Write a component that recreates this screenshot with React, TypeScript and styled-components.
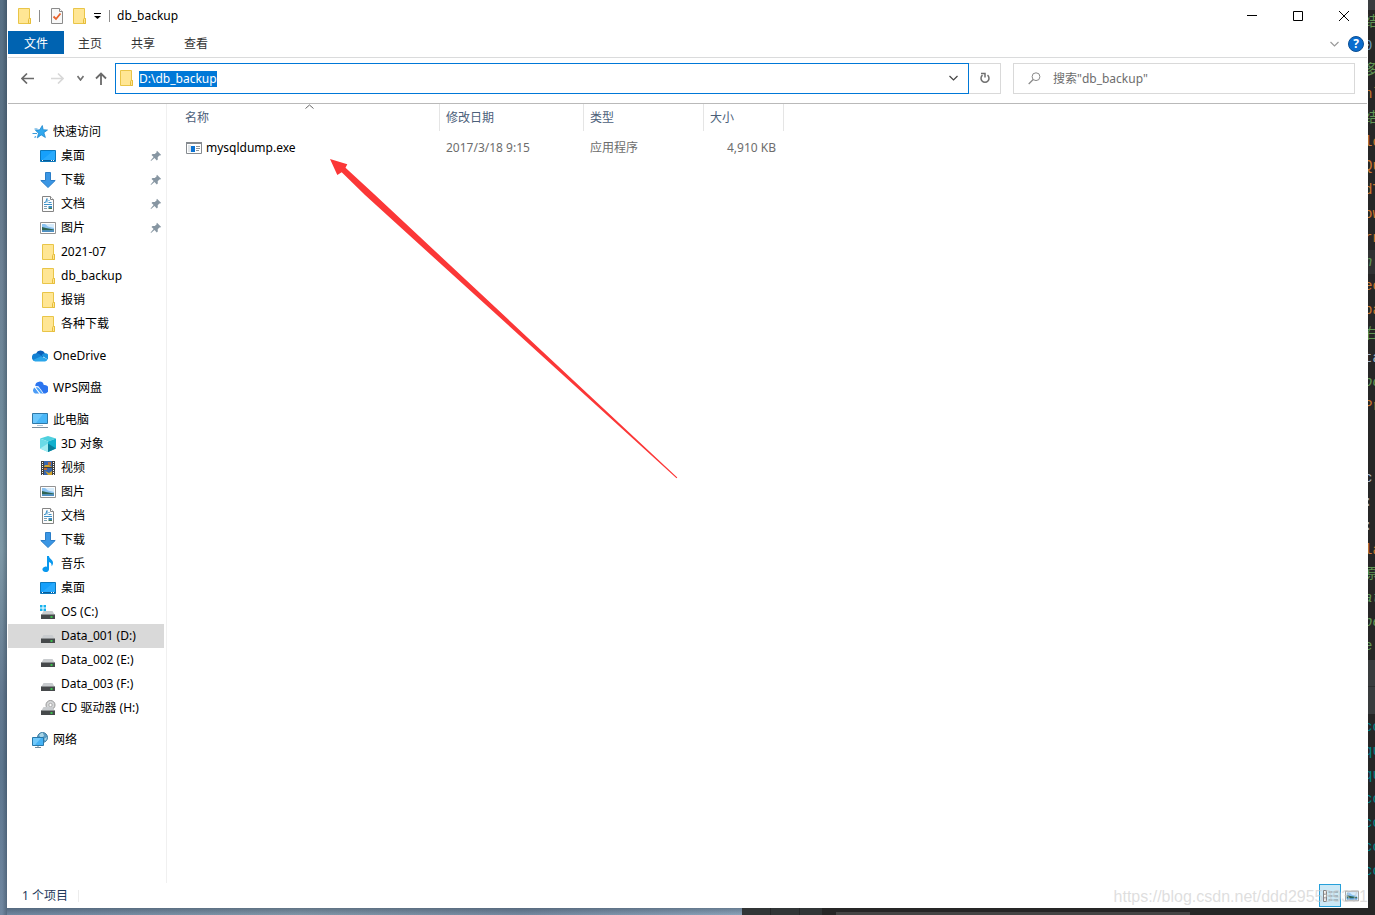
import React, { useEffect, useRef } from "react";
import styled, { createGlobalStyle, css } from "styled-components";

const GlobalStyle = createGlobalStyle`
  * { box-sizing: border-box; }
  body {
    margin: 0;
    font-family: "Noto Sans", "Noto Sans CJK SC", sans-serif;
    font-size: 12px;
    line-height: 16px;
    color: #000;
    background: #262626;
  }
  button, input { font: inherit; color: inherit; }
  svg { display: block; flex: none; }
`;

/* ---------- desktop behind the window ---------- */

const Desktop = styled.div`
  display: grid;
  grid-template-columns: 7px minmax(0, 1fr) 7px;
  grid-template-rows: minmax(0, 1fr) 7px;
  height: 100vh;
  overflow: hidden;
`;

const Wallpaper = styled.div`
  grid-row: 1 / 3;
  background: linear-gradient(90deg, transparent 30%, rgba(20, 35, 50, 0.3)),
    linear-gradient(#587085, #5b7285 14%, #6d8194 30%, #6f8a9b 45%, #7e98a6 60%, #62788f 76%, #5d768e 84%, #7087a0);
`;

const Taskline = styled.div`
  display: flex;
  background: #262626;
`;

const WallpaperFoot = styled.div`
  flex: 0 0 54%;
  background: linear-gradient(rgba(20, 35, 50, 0.3), transparent),
    linear-gradient(90deg, #7087a0, #8297a9 40%, #7589a0 70%, #8ba3ba);
`;

const EditorTabs = styled.div`
  flex: 0 0 80px;
  background: repeating-linear-gradient(90deg, #313536 0 28px, #262829 28px 29px);
`;

const EditorScroll = styled.div`
  flex: 0 0 26%;
  margin: 4px 0 0 14px;
  background: #454545;
`;

const Editor = styled.div`
  grid-column: 3;
  grid-row: 1 / 3;
  overflow: hidden;
  background: #262626;
  border-top: 10px solid #3a3d40;
  font-family: "Liberation Mono", "Noto Sans CJK SC", monospace;
  font-size: 14px;
`;

const CodeLine = styled.div<{ $color?: string; $italic?: boolean; $active?: boolean }>`
  height: 24px;
  line-height: 24px;
  white-space: pre;
  text-indent: -4px;
  color: ${(p) => p.$color || "#a9b7c6"};
  font-style: ${(p) => (p.$italic ? "italic" : "normal")};
  background: ${(p) => (p.$active ? "#303233" : "transparent")};
`;

const ToolStrip = styled.div`
  height: 54px;
  margin: 2px 0 1px;
  background: linear-gradient(#393c3e 26px, #2c2e2f 26px 27px, #393c3e 27px);
`;

/* ---------- window ---------- */

const Window = styled.main`
  position: relative;
  display: flex;
  flex-direction: column;
  min-width: 0;
  padding: 0 1px;
  background: #fff;
`;

const TitleBar = styled.header`
  display: flex;
  align-items: center;
  height: 31px;
  padding-left: 10px;
`;

const QuickButton = styled.button<{ $pad?: boolean }>`
  display: flex;
  padding: ${(p) => (p.$pad ? "0 2px 0 3px" : "0")};
  border: 0;
  background: none;
`;

const QuickTools = styled.div`
  display: flex;
  align-items: center;
  gap: 8px;
`;

const Divider = styled.span`
  width: 1px;
  height: 12px;
  background: #8c8c8c;
`;

const Title = styled.h1`
  flex: 1;
  margin: 0 0 0 7px;
  font-size: 12px;
  font-weight: 400;
`;

const CaptionButton = styled.button`
  display: grid;
  place-items: center;
  width: 46px;
  height: 30px;
  padding: 0;
  border: 0;
  background: none;
`;

const Ribbon = styled.nav`
  display: flex;
  align-items: flex-start;
  height: 27px;
  border-bottom: 1px solid #dadbdc;
`;

const RibbonTab = styled.button<{ $file?: boolean }>`
  height: 23px;
  margin-right: 1px;
  padding: 2px 14px 0;
  border: 0;
  background: none;
  color: #333;
  ${(p) => p.$file && css`
    margin-right: 0;
    padding: 2px 16px 0;
    background: #0063b1;
    color: #fff;
  `}
`;

const RibbonEnd = styled.div`
  display: flex;
  align-items: center;
  gap: 9px;
  height: 26px;
  margin-left: auto;
  padding-right: 3px;
`;

const HelpButton = styled.button`
  width: 16px;
  height: 16px;
  padding: 0;
  border: 1px solid #0b4f93;
  border-radius: 50%;
  background: #0a6cce;
  color: #fff;
  font-weight: 700;
  line-height: 14px;
`;

const NavRow = styled.div`
  display: flex;
  align-items: center;
  height: 46px;
  padding: 0 12px 5px 4px;
  border-bottom: 1px solid #b9b9b9;
`;

const NavButton = styled.button<{ $w: number }>`
  display: grid;
  place-items: center;
  width: ${(p) => p.$w}px;
  height: 29px;
  padding: 0;
  border: 0;
  background: none;
`;

const Address = styled.div`
  display: flex;
  align-items: center;
  flex: 1;
  min-width: 0;
  height: 31px;
  margin-left: 2px;
  padding: 0 4px;
  border: 1px solid #0078d7;
`;

const AddressInput = styled.input`
  flex: 1;
  min-width: 0;
  margin-left: 6px;
  padding: 2px 0 0;
  border: 0;
  outline: 0;
  background: none;
  &::selection { background: #0078d7; color: #fff; }
`;

const Refresh = styled.button`
  display: grid;
  place-items: center;
  width: 32px;
  height: 31px;
  padding: 0;
  border: 1px solid #d9d9d9;
  border-left: 0;
  background: none;
`;

const Search = styled.label`
  display: flex;
  align-items: center;
  flex: 0 1 342px;
  gap: 12px;
  height: 31px;
  margin-left: 12px;
  padding-left: 14px;
  border: 1px solid #d9d9d9;
`;

const SearchInput = styled.input`
  flex: 1;
  min-width: 0;
  padding: 2px 0 0;
  border: 0;
  outline: 0;
  background: none;
  &::placeholder { color: #6d6d6d; opacity: 1; }
`;

const Body = styled.div`
  display: flex;
  flex: 1;
  min-height: 0;
`;

const Sidebar = styled.nav`
  flex: 0 0 159px;
  padding: 16px 2px 0 0;
  border-right: 1px solid #f0f0f0;
`;

const TreeGroup = styled.ul`
  margin: 0 0 8px;
  padding: 0;
  list-style: none;
`;

const TreeItem = styled.a<{ $root?: boolean; $selected?: boolean }>`
  display: flex;
  align-items: center;
  gap: 5px;
  height: 24px;
  padding: 0 2px 0 ${(p) => (p.$root ? 24 : 32)}px;
  background: ${(p) => (p.$selected ? "#d9d9d9" : "transparent")};
  color: #000;
  text-decoration: none;
  white-space: nowrap;
`;

const TreeLabel = styled.span`
  flex: 1;
`;

const FilePane = styled.section`
  position: relative;
  flex: 1;
  min-width: 0;
`;

const FileTable = styled.table`
  width: 605px;
  margin-left: 12px;
  table-layout: fixed;
  border-collapse: separate;
  border-spacing: 0;
`;

const HeadCell = styled.th<{ $w: number }>`
  position: relative;
  width: ${(p) => p.$w}px;
  height: 27px;
  padding: 0 6px;
  border-right: 1px solid #e5e5e5;
  color: #4c607a;
  font-weight: 400;
  text-align: left;
`;

const SortMark = styled.span`
  position: absolute;
  top: 0;
  left: 50%;
  margin-left: -4px;
`;

const Cell = styled.td<{ $right?: boolean }>`
  height: 33px;
  padding: 0 ${(p) => (p.$right ? 8 : 6)}px 0 6px;
  color: #6d6d6d;
  text-align: ${(p) => (p.$right ? "right" : "left")};
`;

const FileName = styled.a`
  display: flex;
  align-items: center;
  gap: 4px;
  padding-left: 1px;
  color: #000;
  text-decoration: none;
`;

const Pointer = styled.svg`
  position: absolute;
  top: 54px;
  left: 162px;
`;

const StatusBar = styled.footer`
  display: flex;
  align-items: center;
  height: 25px;
  padding: 0 4px 0 14px;
  color: #1e395b;
`;

const StatusText = styled.span`
  flex: 1;
`;

const StatusCount = styled.span`
  display: inline-block;
  padding-right: 11px;
  background: linear-gradient(#ececec, #ececec) right center / 1px 12px no-repeat;
`;

const ViewButton = styled.button<{ $on?: boolean }>`
  display: grid;
  place-items: center;
  width: 22px;
  height: 23px;
  padding: 0;
  border: 1px solid ${(p) => (p.$on ? "#26a0da" : "transparent")};
  background: ${(p) => (p.$on ? "#cbe8f6" : "none")};
`;

const Watermark = styled.span`
  position: absolute;
  right: 0;
  bottom: 2px;
  color: rgba(200, 200, 200, 0.6);
  font-family: "Liberation Sans", sans-serif;
  font-size: 16px;
  line-height: 18px;
  pointer-events: none;
`;

/* ---------- icons ---------- */

const FolderIcon = () => (
  <svg width="13" height="16" viewBox="0 0 13 16">
    <path d="M.5.5h11v10h1v5H.5z" fill="#ffe694" stroke="#e9c548" />
    <path d="M10.500 15V11.500q0-1 1-1h1v5h-2z" fill="#ffe694" stroke="#e6bd3a" />
  </svg>
);

const CheckDocIcon = () => (
  <svg width="12" height="16" viewBox="0 0 12 16">
    <path d="M.5.5h8l3 3v12H.5z" fill="#f8f8f8" stroke="#8b8b8b" />
    <path d="M8.500.5v3h3" fill="#fff" stroke="#8b8b8b" />
    <path d="m2.500 8.500 2.500 2.500 4.500-5.500" fill="none" stroke="#e8622c" strokeWidth="1.800" />
  </svg>
);

const StarIcon = () => (
  <svg width="16" height="16" viewBox="0 0 16 16">
    <path d="M10.300 1.500l.9 4.200 4.300.3-3.600 2.700 1.500 4.800-4.200-2.600-3.900 3 1.200-4.700L3.400 6.300l4.300-.5z" fill="#31a8ee" stroke="#1881c8" strokeWidth=".7" />
    <path d="M2.500 5h3M.5 9.500h4.500M4 12.500l-1.500 1" stroke="#3c9bdb" strokeWidth="1.200" />
  </svg>
);

const DesktopIcon = () => (
  <svg width="16" height="16" viewBox="0 0 16 16">
    <path d="M.5 2.500h15v11H.5z" fill="#16a0fb" stroke="#0b78bd" />
    <path d="M1 13 13 3h2v9z" fill="#35b1ff" opacity=".6" />
    <path d="M1 12.500h14" stroke="#075b97" />
    <path d="M2 12.500h1M11 12.500h1M13 12.500h1" stroke="#fff" />
  </svg>
);

const DownloadIcon = () => (
  <svg width="16" height="16" viewBox="0 0 16 16">
    <path d="M5.500.5h5v8h4.700L8 15.500.8 8.500h4.700z" fill="#3a96e4" stroke="#2a7dc7" />
  </svg>
);

const DocIcon = () => (
  <svg width="16" height="16" viewBox="0 0 16 16">
    <path d="M2.500.5h8l3 3v12h-11z" fill="#fcfcfc" stroke="#848484" />
    <path d="M10.500.5v3h3" fill="#fff" stroke="#848484" />
    <path d="M4 6.500h1.500L7 2.500v4M8.500 4.500h1M8.500 6.500h3M4 8.500h8" fill="none" stroke="#3b91c9" />
    <path d="M4 10.500h3M4 12.500h3" stroke="#7d9db3" />
    <path d="M8.500 10H12v2H8.500z" fill="#3a8cc0" />
    <path d="M8.500 12H12v1H8.500z" fill="#42784f" />
  </svg>
);

const PictureIcon = ({ size = 16 }: { size?: number }) => (
  <svg width={size} height={size} viewBox="0 0 16 16">
    <path d="M.5 2.500h15v11H.5z" fill="#fff" stroke="#939393" />
    <path d="M2 4h12v8H2z" fill="#8cc3f2" />
    <path d="M5 4h9v4L8 6.500z" fill="#d7ecfb" />
    <path d="M2 7l4 1 8 1.500v1H2z" fill="#2f6554" />
    <path d="M2 10.500h12V12H2z" fill="#4d8fc4" />
  </svg>
);

const PinIcon = () => (
  <svg width="12" height="12" viewBox="0 0 12 12">
    <path d="m7 .8 4.200 4.200-1.200.6-.6-.2-1.700 1.900.1 2.200-1 .9-2.300-2.300L1 11l-.4-.4 3-3.500L1.500 4.900l1-1 2.300.1 1.900-1.700-.2-.7z" fill="#8796a2" />
  </svg>
);

const OneDriveIcon = () => (
  <svg width="16" height="16" viewBox="0 0 16 16">
    <path d="M4 5.500a5 5 0 0 1 9-.3l-3 5z" fill="#0a5eb8" />
    <path d="M3.500 5.500a4 4 0 0 1 4 .7l3.500 3-8 4A3.900 3.900 0 0 1 3.500 5.500z" fill="#1381d3" />
    <path d="M9.500 7.500a4 4 0 0 1 3.800-2.200 3.400 3.400 0 0 1 2.200 6z" fill="#1a91dd" />
    <path d="m1 12 8-3.800 6.600 3a3 3 0 0 1-2.600 2.300H3.500A3 3 0 0 1 1 12z" fill="#2aa5ea" />
  </svg>
);

const WpsIcon = () => (
  <svg width="16" height="16" viewBox="0 0 16 16">
    <path d="M3.300 6a4.300 4.300 0 0 1 8.500-1 4.300 4.300 0 0 1 1.500 8.500h-2.800L6.500 6.500z" fill="#2c75ef" />
    <path d="M4.500 7q1.800-.3 3 1.500l3.500 5H8.500L4 8z" fill="#4aa4fa" />
    <path d="M2.800 7.500 7.300 13.500H3A3.300 3.300 0 0 1 2.800 7.500z" fill="#4b9cf6" />
    <path d="M3.200 7.700 7.600 13.500M4.500 6.600q2-.2 3.500 2l3.200 4.900" fill="none" stroke="#fff" strokeWidth=".8" />
  </svg>
);

const ComputerIcon = () => (
  <svg width="16" height="16" viewBox="0 0 16 16">
    <path d="M.5 1.500h15v10H.5z" fill="#49b7f8" stroke="#2f79a8" />
    <path d="M1 2h10L4 11H1z" fill="#83d2ff" opacity=".6" />
    <path d="M5 13.500h6" stroke="#a9c4d6" />
    <path d="M0 15.500h16" stroke="#7b8d9b" />
  </svg>
);

const CubeIcon = () => (
  <svg width="16" height="16" viewBox="0 0 16 16">
    <path d="m8 0 8 2.500L8 5.500 0 2.500z" fill="#4fd0de" />
    <path d="m0 2.500 8 3V16l-8-3.500z" fill="#6adbe7" />
    <path d="m16 2.500-8 3V16l8-3.500z" fill="#12b0cd" />
    <path d="m0 12.500 8-5V16z" fill="#a3edf2" />
    <path d="m8 7.500 8 5L8 16z" fill="#087f9b" />
  </svg>
);

const VideoIcon = () => (
  <svg width="16" height="16" viewBox="0 0 16 16">
    <path d="M1 1h14v14H1z" fill="#404040" />
    <path d="M4 1h8v6H4zM4 8h8v7H4z" fill="#3867ae" />
    <path d="M5 5h4l3 2H4zM5 11l4 2 3-2v4H8z" fill="#d3a52b" />
    <path d="M8 2h3v3H8zM4 8h3v2H4z" fill="#bb6b35" />
    <path d="M2.500 2v13M13.500 2v13" stroke="#fff" strokeDasharray="1 1" />
  </svg>
);

const MusicIcon = () => (
  <svg width="16" height="16" viewBox="0 0 16 16">
    <path d="M7 0h2c0 3 4 3.500 4 7 0 1.500-.8 2.600-1.500 3.300C12 7.500 10.500 6.500 9 6v7a3.300 2.700 0 1 1-2-2.200z" fill="#0998ee" />
  </svg>
);

const DriveIcon = ({ kind }: { kind?: "os" | "cd" }) => (
  <svg width="16" height="16" viewBox="0 0 16 16">
    {kind === "os" && <path d="M0 1h2.500v2.500H0zM3.500 1H6v2.500H3.500zM0 4.500h2.500V7H0zM3.500 4.500H6V7H3.500z" fill="#16b2ee" />}
    {kind === "cd" && (
      <g>
        <circle cx="10.500" cy="5" r="4.500" fill="#d4d6d7" stroke="#999" />
        <circle cx="10.500" cy="5" r="1.700" fill="#fff" stroke="#aaa" />
      </g>
    )}
    <path d="M3.500 7h9L14.500 10.500h-13z" fill="#c9cccf" />
    <path d="M1 10.500h14V15H1z" fill="#46494b" />
    <path d="M1 10.500h14" stroke="#8b8e90" />
    <path d="M10.500 13h2" stroke="#37e84c" strokeWidth="1.500" />
  </svg>
);

const NetworkIcon = () => (
  <svg width="16" height="16" viewBox="0 0 16 16">
    <circle cx="10.500" cy="5.500" r="5" fill="#5a9bc2" stroke="#3d7da2" />
    <path d="M7 3q3-3 4-2l1 3-3 2zM12 7l3-2-1 4z" fill="#a9d5e6" />
    <path d="M.5 5.500h11v8H.5z" fill="#45b2f5" stroke="#2878aa" />
    <path d="M1 6h8l-6 7H1z" fill="#90d8ff" opacity=".6" />
    <path d="M3 15.500h6M6 14v1" stroke="#708b9c" />
  </svg>
);

const AppIcon = () => (
  <svg width="16" height="12" viewBox="0 0 16 12">
    <path d="M.5.5h15v11H.5z" fill="#fff" stroke="#868b90" />
    <path d="M0 1h16" stroke="#868b90" strokeWidth="2" />
    <path d="M2 3h3v7H2z" fill="#e2e6e9" />
    <path d="M5 4h4v6H5z" fill="#0b73d3" />
    <path d="M10 4.500h4M10 6.500h4M10 8.500h3" stroke="#8f9498" />
  </svg>
);

const Chevron = ({ w = 8, color = "#555", up = false, stroke = 1.2 }: { w?: number; color?: string; up?: boolean; stroke?: number }) => (
  <svg width={w} height="6" viewBox={`0 0 ${w} 6`}>
    <path d={up ? `M.5 4.500 ${w / 2} 1 ${w - 0.5} 4.500` : `M.5 1 ${w / 2} 5 ${w - 0.5} 1`} fill="none" stroke={color} strokeWidth={stroke} />
  </svg>
);

const BackArrow = ({ color, flip }: { color: string; flip?: boolean }) => (
  <svg width="13" height="12" viewBox="0 0 13 12">
    <path d={flip ? "M0 6.500h12M7 1.500l5 5-5 5" : "M13 6.500H1M6 1.500l-5 5 5 5"} fill="none" stroke={color} strokeWidth="1.700" />
  </svg>
);

/* ---------- data ---------- */

type Node = { label: string; icon: React.ReactNode; root?: boolean; pinned?: boolean; selected?: boolean };

const tree: Node[][] = [
  [
    { label: "快速访问", icon: <StarIcon />, root: true },
    { label: "桌面", icon: <DesktopIcon />, pinned: true },
    { label: "下载", icon: <DownloadIcon />, pinned: true },
    { label: "文档", icon: <DocIcon />, pinned: true },
    { label: "图片", icon: <PictureIcon />, pinned: true },
    { label: "2021-07", icon: <FolderIcon /> },
    { label: "db_backup", icon: <FolderIcon /> },
    { label: "报销", icon: <FolderIcon /> },
    { label: "各种下载", icon: <FolderIcon /> },
  ],
  [{ label: "OneDrive", icon: <OneDriveIcon />, root: true }],
  [{ label: "WPS网盘", icon: <WpsIcon />, root: true }],
  [
    { label: "此电脑", icon: <ComputerIcon />, root: true },
    { label: "3D 对象", icon: <CubeIcon /> },
    { label: "视频", icon: <VideoIcon /> },
    { label: "图片", icon: <PictureIcon /> },
    { label: "文档", icon: <DocIcon /> },
    { label: "下载", icon: <DownloadIcon /> },
    { label: "音乐", icon: <MusicIcon /> },
    { label: "桌面", icon: <DesktopIcon /> },
    { label: "OS (C:)", icon: <DriveIcon kind="os" /> },
    { label: "Data_001 (D:)", icon: <DriveIcon />, selected: true },
    { label: "Data_002 (E:)", icon: <DriveIcon /> },
    { label: "Data_003 (F:)", icon: <DriveIcon /> },
    { label: "CD 驱动器 (H:)", icon: <DriveIcon kind="cd" /> },
  ],
  [{ label: "网络", icon: <NetworkIcon />, root: true }],
];

const IconSlot = styled.span`
  display: grid;
  place-items: center;
  width: 16px;
  height: 16px;
`;

const green = "#629755";
const orange = "#cc7832";
const teal = "#00838a";

const code: { t: string; c?: string; i?: boolean; a?: boolean }[] = [
  { t: "结", c: green }, { t: "0", c: "#6897bb" }, { t: "多", c: green }, { t: "nl", c: orange },
  { t: "结", c: green }, { t: "lo", c: orange }, { t: "Qu", c: orange }, { t: "dT", c: orange },
  { t: "ow", c: orange }, { t: "rn", c: orange }, { t: "h", c: green, i: true, a: true }, { t: "ec", c: orange },
  { t: "ba", c: orange }, { t: "右", c: green }, { t: "ta" }, { t: "oc", c: green, i: true }, { t: "Pr", c: orange },
  { t: " " }, { t: " " }, { t: "c" }, { t: ":" }, { t: ":" }, { t: "la", c: orange }, { t: "原", c: green },
  { t: "at", c: green, i: true }, { t: "be", c: green, i: true }, { t: "e", c: green },
];

const consoleLines = ["co", "qu", "qu", "co", "co", "co", "co"];

export default function App() {
  const address = useRef<HTMLInputElement>(null);

  useEffect(() => {
    address.current?.focus();
    address.current?.select();
  }, []);

  return (
    <>
      <GlobalStyle />
      <Desktop>
        <Wallpaper />
        <Window>
          <TitleBar>
            <QuickTools>
              <FolderIcon />
              <Divider />
              <QuickButton $pad aria-label="属性"><CheckDocIcon /></QuickButton>
              <QuickButton aria-label="新建文件夹"><FolderIcon /></QuickButton>
              <QuickButton aria-label="自定义快速访问工具栏">
                <svg width="7" height="6" viewBox="0 0 7 6">
                  <path d="M0 .5h7" stroke="#000" />
                  <path d="M0 3h7L3.500 6z" fill="#000" />
                </svg>
              </QuickButton>
              <Divider />
            </QuickTools>
            <Title>db_backup</Title>
            <CaptionButton aria-label="最小化">
              <svg width="10" height="10" viewBox="0 0 10 10"><path d="M0 4.500h10" stroke="#000" /></svg>
            </CaptionButton>
            <CaptionButton aria-label="最大化">
              <svg width="10" height="10" viewBox="0 0 10 10"><path d="M.5.5h9v9h-9z" fill="none" stroke="#000" /></svg>
            </CaptionButton>
            <CaptionButton aria-label="关闭">
              <svg width="10" height="10" viewBox="0 0 10 10"><path d="m0 0 10 10M10 0 0 10" stroke="#000" /></svg>
            </CaptionButton>
          </TitleBar>

          <Ribbon>
            <RibbonTab $file>文件</RibbonTab>
            <RibbonTab>主页</RibbonTab>
            <RibbonTab>共享</RibbonTab>
            <RibbonTab>查看</RibbonTab>
            <RibbonEnd>
              <QuickButton aria-label="展开功能区"><Chevron w={9} color="#9a9a9a" /></QuickButton>
              <HelpButton aria-label="帮助">?</HelpButton>
            </RibbonEnd>
          </Ribbon>

          <NavRow>
            <NavButton $w={30} aria-label="返回"><BackArrow color="#6a6a6a" /></NavButton>
            <NavButton $w={30} aria-label="前进"><BackArrow color="#d8d8d8" flip /></NavButton>
            <NavButton $w={17} aria-label="最近浏览的位置"><Chevron w={7} color="#707070" stroke={1.6} /></NavButton>
            <NavButton $w={24} aria-label="向上">
              <svg width="12" height="13" viewBox="0 0 12 13">
                <path d="M6 13V1M1 6.500 6 1.500l5 5" fill="none" stroke="#6a6a6a" strokeWidth="1.800" />
              </svg>
            </NavButton>
            <Address>
              <FolderIcon />
              <AddressInput ref={address} aria-label="地址" defaultValue="D:\db_backup" spellCheck={false} />
              <NavButton $w={22} aria-label="以前的位置"><Chevron w={9} color="#444" /></NavButton>
            </Address>
            <Refresh aria-label="刷新">
              <svg width="10" height="12" viewBox="0 0 10 12">
                <path d="M7.500 3.200A4 4 0 1 1 2.500 3.200" fill="none" stroke="#6f6f6f" strokeWidth="1.500" />
                <path d="M1 1.500h4v4" fill="none" stroke="#6f6f6f" strokeWidth="1.500" />
              </svg>
            </Refresh>
            <Search>
              <svg width="13" height="13" viewBox="0 0 13 13">
                <circle cx="8" cy="4.700" r="3.900" fill="none" stroke="#8a8a8a" />
                <path d="M5.200 7.500.7 12" stroke="#8a8a8a" strokeWidth="1.200" />
              </svg>
              <SearchInput aria-label="搜索" placeholder={'搜索"db_backup"'} />
            </Search>
          </NavRow>

          <Body>
            <Sidebar>
              {tree.map((group, g) => (
                <TreeGroup key={g}>
                  {group.map((n) => (
                    <li key={n.label}>
                      <TreeItem href="#" $root={n.root} $selected={n.selected}>
                        <IconSlot>{n.icon}</IconSlot>
                        <TreeLabel>{n.label}</TreeLabel>
                        {n.pinned && <PinIcon />}
                      </TreeItem>
                    </li>
                  ))}
                </TreeGroup>
              ))}
            </Sidebar>
            <FilePane>
              <FileTable>
                <thead>
                  <tr>
                    <HeadCell $w={261}>名称<SortMark><Chevron w={9} up color="#666" stroke={1} /></SortMark></HeadCell>
                    <HeadCell $w={144}>修改日期</HeadCell>
                    <HeadCell $w={120}>类型</HeadCell>
                    <HeadCell $w={80}>大小</HeadCell>
                  </tr>
                </thead>
                <tbody>
                  <tr>
                    <Cell><FileName href="#"><AppIcon />mysqldump.exe</FileName></Cell>
                    <Cell>2017/3/18 9:15</Cell>
                    <Cell>应用程序</Cell>
                    <Cell $right>4,910 KB</Cell>
                  </tr>
                </tbody>
              </FileTable>
              <Pointer width="350" height="322" viewBox="0 0 350 322">
                <path d="M1 1 18.300 6.300 16.500 9.700 45 36 348.300 319.500 347.500 320.300 36 37 12.700 14.300 8.300 17z" fill="#fb3737" />
              </Pointer>
            </FilePane>
          </Body>

          <StatusBar>
            <StatusText><StatusCount>1 个项目</StatusCount></StatusText>
            <ViewButton $on aria-label="详细信息">
              <svg width="15" height="12" viewBox="0 0 15 12">
                <path d="M.5.5h3v11h-3zM.5 4.200h3M.5 7.800h3" fill="#fff" stroke="#808080" />
                <path d="M5.500 2h4M10.500 2H15M5.500 6h4M10.500 6H15M5.500 10h4M10.500 10H15" stroke="#77858e" />
              </svg>
            </ViewButton>
            <ViewButton aria-label="大图标"><PictureIcon size={14} /></ViewButton>
          </StatusBar>
          <Watermark>https://blog.csdn.net/ddd295589371</Watermark>
        </Window>
        <Editor aria-hidden="true">
          {code.map((l, i) => (
            <CodeLine key={i} $color={l.c} $italic={l.i} $active={l.a}>{l.t}</CodeLine>
          ))}
          <ToolStrip />
          {consoleLines.map((t, i) => (
            <CodeLine key={i} $color={teal}>{t}</CodeLine>
          ))}
        </Editor>
        <Taskline>
          <WallpaperFoot />
          <EditorTabs />
          <EditorScroll />
        </Taskline>
      </Desktop>
    </>
  );
}
